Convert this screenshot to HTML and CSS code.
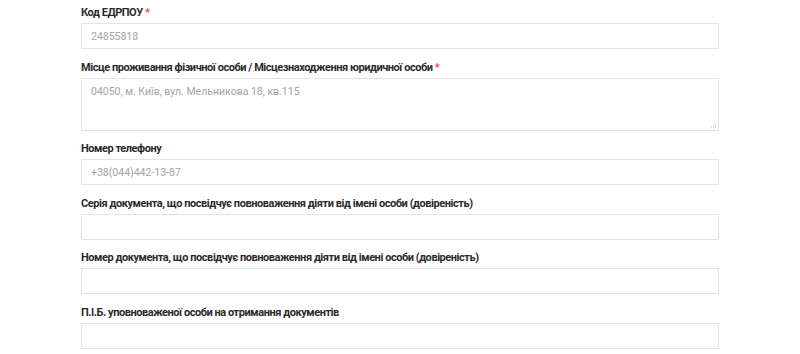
FILE: index.html
```html
<!DOCTYPE html>
<html lang="uk">
<head>
  <meta charset="UTF-8">
  <meta name="viewport" content="width=device-width, initial-scale=1.0">
  <title>Реквізити</title>
  <link rel="stylesheet" href="styles.css">
</head>
<body>
  <form class="form">
    <!-- Код ЕДРПОУ -->
    <div class="field">
      <label class="field-label">Код ЕДРПОУ <span class="req">*</span></label>
      <input class="field-input" type="text" placeholder="24855818">
    </div>

    <!-- Адреса -->
    <div class="field">
      <label class="field-label">Місце проживання фізичної особи / Місцезнаходження юридичної особи <span class="req">*</span></label>
      <div class="area-wrap">
        <textarea class="field-input field-area" placeholder="04050, м. Київ, вул. Мельникова 18, кв.115"></textarea>
        <svg class="grip" width="7" height="7" viewBox="0 0 7 7">
          <rect x="5" y="0" width="1" height="1" fill="#c8c8c8"/>
          <rect x="3" y="2" width="1" height="1" fill="#c8c8c8"/>
          <rect x="5" y="2" width="1" height="1" fill="#c8c8c8"/>
          <rect x="1" y="4" width="1" height="1" fill="#c8c8c8"/>
          <rect x="3" y="4" width="1" height="1" fill="#c8c8c8"/>
          <rect x="5" y="4" width="1" height="1" fill="#c8c8c8"/>
        </svg>
      </div>
    </div>

    <div class="field">
      <label class="field-label">Номер телефону</label>
      <input class="field-input" type="text" placeholder="+38(044)442-13-87">
    </div>

    <div class="field">
      <label class="field-label">Серія документа, що посвідчує повноваження діяти від імені особи (довіреність)</label>
      <input class="field-input" type="text">
    </div>

    <div class="field">
      <label class="field-label">Номер документа, що посвідчує повноваження діяти від імені особи (довіреність)</label>
      <input class="field-input" type="text">
    </div>

    <div class="field">
      <label class="field-label">П.І.Б. уповноваженої особи на отримання документів</label>
      <input class="field-input" type="text">
    </div>
  </form>
</body>
</html>
```

FILE: styles.css
```css
/* General Reset */
body {
  font-family: Roboto, "Liberation Sans", sans-serif;
  margin: 0;
  padding: 0;
  background-color: #fff;
  color: #333;
}

/* Form */
.form {
  width: 638px;
  margin: 0 auto;
  padding-top: 4px;
}

.field {
  margin-bottom: 9.5px;
}

.field-label {
  display: block;
  font-size: 11px;
  font-weight: 700;
  line-height: 18px;
  margin-bottom: 1px;
  letter-spacing: -0.45px;
  color: #2b2b2b;
}

.req {
  color: #e74c3c;
}

.field-input {
  display: block;
  box-sizing: border-box;
  width: 100%;
  height: 26px;
  padding: 0 9px;
  border: 1px solid #e3e3e6;
  border-radius: 0;
  background: #fff;
  font-family: Roboto, "Liberation Sans", sans-serif;
  font-size: 10.5px;
  color: #555;
  outline: none;
}

.field-input::placeholder {
  color: #a3a3a3;
}

/* Textarea with light grip */
.area-wrap {
  position: relative;
}

.field-area {
  height: 53px;
  padding-top: 6px;
  resize: none;
}

.grip {
  position: absolute;
  right: 2px;
  bottom: 1px;
}
```
